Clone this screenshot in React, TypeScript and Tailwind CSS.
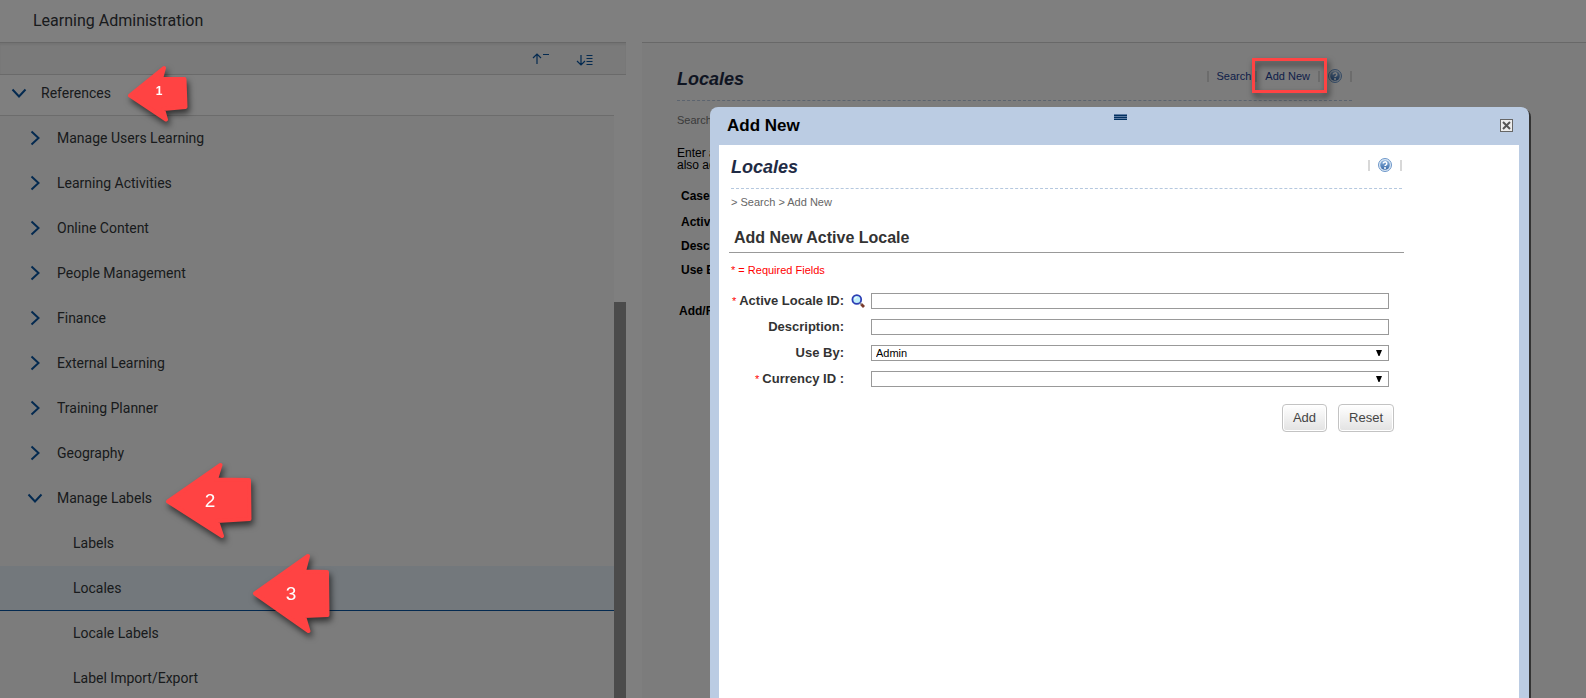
import React, { useState } from 'react';

interface NavNode {
  label: string;
  open?: boolean;
  children?: string[];
}

const navNodes: NavNode[] = [
  { label: 'Manage Users Learning' },
  { label: 'Learning Activities' },
  { label: 'Online Content' },
  { label: 'People Management' },
  { label: 'Finance' },
  { label: 'External Learning' },
  { label: 'Training Planner' },
  { label: 'Geography' },
  {
    label: 'Manage Labels',
    open: true,
    children: ['Labels', 'Locales', 'Locale Labels', 'Label Import/Export'],
  },
];

const filterLabels = ['Activ', 'Desc', 'Use B'];

function Chevron({ open }: { open?: boolean }) {
  return (
    <svg width="16" height="16" viewBox="0 0 16 16" fill="none" stroke="#0854a0" strokeWidth="2" aria-hidden="true">
      <path d={open ? 'M1.5 4.5 8 11.5 14.5 4.5' : 'M4.5 1.5 11.5 8 4.5 14.5'} />
    </svg>
  );
}

function HelpIcon() {
  return (
    <svg width="14" height="14" viewBox="0 0 14 14" aria-hidden="true">
      <defs>
        <linearGradient id="help-fill" x1="0" y1="0" x2="0" y2="1">
          <stop offset="0" stopColor="#8db4de" />
          <stop offset="1" stopColor="#3a6aa8" />
        </linearGradient>
      </defs>
      <circle cx="7" cy="7" r="6.5" fill="#dbe7f4" stroke="#6d97c9" />
      <circle cx="7" cy="7" r="4.8" fill="url(#help-fill)" />
      <path d="M5.2 5.6a1.8 1.7 0 1 1 2.6 1.5c-.6.3-.8.5-.8 1" fill="none" stroke="#fff" strokeWidth="1.5" />
      <circle cx="7" cy="9.9" r="1" fill="#fff" />
    </svg>
  );
}

function SearchIcon() {
  return (
    <svg width="14" height="14" viewBox="0 0 14 14" aria-hidden="true">
      <circle cx="5.8" cy="5.5" r="4.4" fill="#bfeefa" stroke="#2c3fb4" strokeWidth="1.8" />
      <path d="M3.6 5.2a2.4 2.4 0 0 1 2.2-2" fill="none" stroke="#fff" strokeWidth="1" />
      <path d="M9 9l1.4 1.4" stroke="#8a8a9c" strokeWidth="2" />
      <path d="M10.3 10.3l2.7 2.7" stroke="#7a3b2c" strokeWidth="2.8" />
    </svg>
  );
}

function Bar() {
  return <span className="h-[11px] w-0.5 bg-[#d8d8d8]" />;
}

function Sidebar() {
  const [active, setActive] = useState('Locales');

  return (
    <aside className="flex w-[626px] shrink-0 flex-col font-[Roboto,sans-serif] text-sm text-[#32363a]">
      <div className="flex h-8 shrink-0 items-center justify-end gap-[27px] border-b border-[#d5d5d5] bg-[#f5f5f5] pr-[33px] shadow-[inset_0_2px_2px_#e6e6e6]">
        <button type="button" aria-label="Collapse all">
          <svg width="17" height="14" viewBox="0 0 17 14" fill="none" stroke="#0854a0" strokeWidth="1.2">
            <path d="M5 12V2M1 6l4-4 4 4M11 2.5h6" />
          </svg>
        </button>
        <button type="button" aria-label="Expand all">
          <svg width="17" height="14" viewBox="0 0 17 14" fill="none" stroke="#0854a0" strokeWidth="1.2">
            <path d="M5 3v10M1 9l4 4 4-4M10.500 3.500h6M10.500 6.500h6M10.500 9.500h6M10.500 12.500h6" />
          </svg>
        </button>
      </div>
      <div className="flex min-h-0 grow">
        <nav className="grow">
          <button
            type="button"
            className="flex h-[41px] w-full items-center gap-[14px] border-b border-[#d9d9d9] bg-white px-[11px] pb-1 text-left"
          >
            <Chevron open />
            References
          </button>
          <ul className="bg-[#f9f9f9]">
            {navNodes.map((node) => (
              <li key={node.label}>
                <button type="button" className="flex h-[45px] w-full items-center gap-[14px] px-[27px] pb-0.5 text-left">
                  <Chevron open={node.open} />
                  {node.label}
                </button>
                {node.children && (
                  <ul>
                    {node.children.map((child) => (
                      <li key={child}>
                        <button
                          type="button"
                          onClick={() => setActive(child)}
                          className={`h-[45px] w-full border-b px-[73px] text-left ${
                            child === active ? 'border-[#0854a0] bg-[#e6f1f9]' : 'border-transparent'
                          }`}
                        >
                          {child}
                        </button>
                      </li>
                    ))}
                  </ul>
                )}
              </li>
            ))}
          </ul>
        </nav>
        <div className="flex w-3 shrink-0 flex-col pt-[227px]">
          <div className="grow bg-[#969696]" />
        </div>
      </div>
    </aside>
  );
}

function LocalesPage() {
  return (
    <main className="grow bg-[#f8f8f8] pt-6 pl-[35px] text-xs text-black">
      <div className="w-[675px]">
        <header className="flex h-[34px] items-start justify-between border-b border-dashed border-[#b9c9de]">
          <h1 className="text-lg leading-6 font-bold text-[#1f2b45] italic">Locales</h1>
          <div className="flex h-[18px] items-center gap-2 text-[11px] text-[#1d3f94]">
            <Bar />
            <div className="flex items-center gap-1">
              <a href="#search">Search</a>
              <Bar />
            </div>
            <a href="#add">Add New</a>
            <Bar />
            <button type="button" aria-label="Help">
              <HelpIcon />
            </button>
            <Bar />
          </div>
        </header>
        <p className="mt-[11px] text-[11px] leading-4 text-[#777]">Search</p>
        <p className="mt-[19px] leading-3">
          Enter a
          <br />
          also ad
        </p>
        <div className="mt-[13px] flex flex-col pl-1 leading-6 font-bold">
          <p className="mb-0.5">Case</p>
          {filterLabels.map((label) => (
            <p key={label}>{label}</p>
          ))}
        </div>
        <p className="mt-[17px] pl-0.5 leading-6 font-bold">Add/R</p>
      </div>
    </main>
  );
}

interface FieldRowProps {
  id: string;
  label: string;
  required?: boolean;
  lookup?: boolean;
  children: React.ReactNode;
}

function FieldRow({ id, label, required, lookup, children }: FieldRowProps) {
  return (
    <div className="flex h-4 items-center">
      <label htmlFor={id} className="w-[115px] shrink-0 text-right text-[13px] font-bold whitespace-nowrap text-[#333]">
        {required && <span className="mr-[3px] text-[11px] font-normal text-[#f00]">*</span>}
        {label}
      </label>
      <div className="flex w-[27px] shrink-0 pl-[7px]">
        {lookup && (
          <button type="button" aria-label="Look up locale">
            <SearchIcon />
          </button>
        )}
      </div>
      {children}
    </div>
  );
}

function SelectBox({ id, options }: { id: string; options: string[] }) {
  return (
    <div className="grid h-4 grow items-center">
      <select
        id={id}
        className="col-start-1 row-start-1 h-4 w-full appearance-none border border-[#999] bg-white px-1 text-[11px] leading-none text-black"
      >
        {options.map((option) => (
          <option key={option}>{option}</option>
        ))}
      </select>
      <svg
        className="pointer-events-none col-start-1 row-start-1 mr-[7px] justify-self-end"
        width="6"
        height="6"
        viewBox="0 0 6 6"
        aria-hidden="true"
      >
        <path d="M0 0h6L3.500 6h-1z" />
      </svg>
    </div>
  );
}

const inputClass = 'h-4 min-w-0 grow border border-[#999] bg-white px-1 text-[11px]';
const buttonClass =
  'h-7 rounded border border-[#c3c3c3] bg-linear-to-b from-white to-[#e2e2e2] px-[10px] text-[13px] text-[#444] shadow-[inset_0_0_0_1px_#fff]';

function AddNewDialog() {
  return (
    <section
      role="dialog"
      aria-label="Add New"
      className="absolute top-[107px] right-[57px] bottom-0 left-[710px] flex flex-col rounded-t-lg bg-[#bbcce3] shadow-[2px_2px_0_#333]"
    >
      <div className="flex h-[38px] shrink-0 items-start justify-between px-4">
        <h2 className="flex-1 pl-px text-[17px] leading-[38px] font-bold text-black">Add New</h2>
        <svg className="mt-[7px]" width="13" height="6" viewBox="0 0 13 6" aria-hidden="true">
          <path d="M0 0h13v6H0z" fill="#5d7aa3" />
          <path d="M0 1.500h13M0 3.500h13M0 5.500h13" stroke="#00305f" strokeWidth="1" />
        </svg>
        <div className="flex flex-1 justify-end pt-3">
          <button type="button" aria-label="Close" className="border border-[#666] bg-[#ececec]">
            <svg width="11" height="11" viewBox="0 0 11 11" stroke="#555" strokeWidth="2">
              <path d="M2 2l7 7M9 2l-7 7" />
            </svg>
          </button>
        </div>
      </div>
      <div className="mr-[10px] ml-[9px] grow bg-white pr-[115px] pl-[10px]">
        <div className="px-0.5 pt-[10px]">
          <header className="flex h-[34px] items-start justify-between border-b border-dashed border-[#b5c8df]">
            <h3 className="text-lg leading-6 font-bold text-[#1f2b45] italic">Locales</h3>
            <div className="flex h-5 items-center gap-2">
              <Bar />
              <button type="button" aria-label="Help">
                <HelpIcon />
              </button>
              <Bar />
            </div>
          </header>
          <p className="mt-[5px] text-[11px] leading-4 text-[#666]">&gt; Search &gt; Add New</p>
        </div>
        <h4 className="mt-[14px] border-b border-[#999] pl-[5px] text-base leading-7 font-bold text-[#333]">
          Add New Active Locale
        </h4>
        <p className="mt-[9px] pl-0.5 text-[11px] leading-4 text-[#f00]">* = Required Fields</p>
        <form onSubmit={(e) => e.preventDefault()} className="mt-[15px] flex flex-col gap-[10px] pr-[15px]">
          <FieldRow id="localeId" label="Active Locale ID:" required lookup>
            <input id="localeId" type="text" className={inputClass} />
          </FieldRow>
          <FieldRow id="description" label="Description:">
            <input id="description" type="text" className={inputClass} />
          </FieldRow>
          <FieldRow id="useBy" label="Use By:">
            <SelectBox id="useBy" options={['Admin']} />
          </FieldRow>
          <FieldRow id="currencyId" label="Currency ID :" required>
            <SelectBox id="currencyId" options={['']} />
          </FieldRow>
          <div className="-mr-[5px] mt-[7px] flex justify-end gap-[11px]">
            <button type="submit" className={buttonClass}>
              Add
            </button>
            <button type="reset" className={buttonClass}>
              Reset
            </button>
          </div>
        </form>
      </div>
    </section>
  );
}

// Numbered arrows and the highlight box that sit over everything
function Callouts() {
  return (
    <svg
      className="pointer-events-none absolute top-0 left-0 drop-shadow-[2px_4px_3px_rgba(0,0,0,0.6)]"
      width="1340"
      height="690"
      aria-hidden="true"
    >
      <g fill="#ff4343" stroke="#ff4343" strokeWidth="4" strokeLinejoin="round">
        <path d="M130 95.500 164 68 161 79H184.500L185.500 107 163 109 166 119.500Z" />
        <path d="M168 501.500 220.500 465 216 479.500 249 480 249.500 519 217 521 222 536Z" />
        <path d="M255 593.500 308 556 304 571.500 327 572 327.500 615 304 616 308.500 631Z" />
      </g>
      <rect x="1253.500" y="59.500" width="72" height="32" fill="none" stroke="#ff4343" strokeWidth="3" />
      <g fill="#fff" fontFamily="Liberation Sans, sans-serif" fontSize="19" textAnchor="middle">
        <text x="159" y="95" fontSize="12" fontWeight="bold">
          1
        </text>
        <text x="210" y="507">2</text>
        <text x="291" y="600">3</text>
      </g>
    </svg>
  );
}

export default function App() {
  return (
    <div className="relative flex h-screen flex-col overflow-hidden bg-white font-['Liberation_Sans',Arial,sans-serif]">
      <header className="flex h-[42px] shrink-0 items-center px-[33px] font-[Roboto,sans-serif] text-base text-[#32363a]">
        Learning Administration
      </header>
      <div className="flex min-h-0 grow gap-4">
        <div className="flex border-t border-[#d0d0d0]">
          <Sidebar />
        </div>
        <div className="flex grow border-t border-[#d0d0d0]">
          <LocalesPage />
        </div>
      </div>
      <div className="absolute inset-0 bg-black/50" />
      <AddNewDialog />
      <Callouts />
    </div>
  );
}
